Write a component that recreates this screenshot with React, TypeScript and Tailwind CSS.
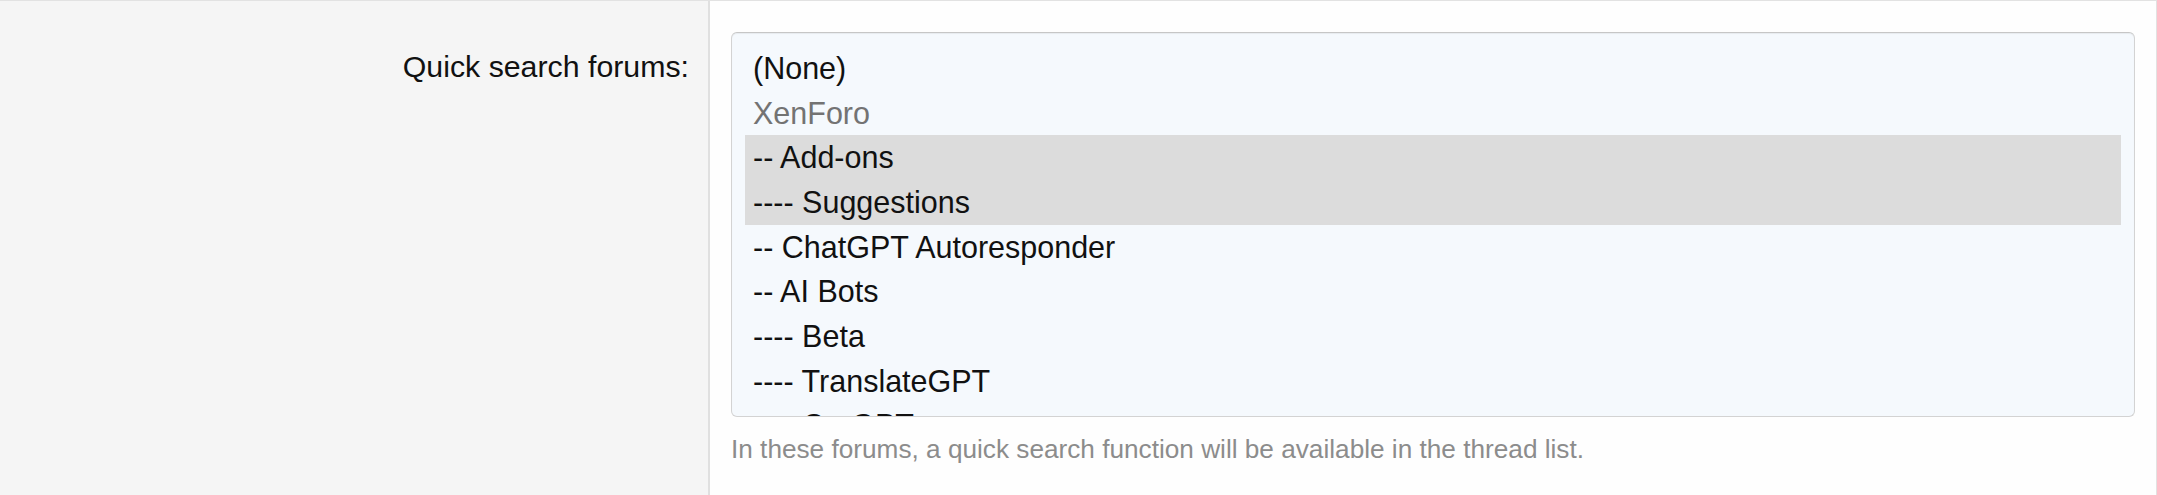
import React from "react";

type ForumOption = {
  label: string;
  group?: boolean;
  selected?: boolean;
};

const options: ForumOption[] = [
  { label: "(None)" },
  { label: "XenForo", group: true },
  { label: "-- Add-ons", selected: true },
  { label: "---- Suggestions", selected: true },
  { label: "-- ChatGPT Autoresponder" },
  { label: "-- AI Bots" },
  { label: "---- Beta" },
  { label: "---- TranslateGPT" },
  { label: "---- CarGPT" },
];

function ForumSelect() {
  return (
    <div className="h-[385px] overflow-hidden rounded-[6px] border border-[#d3d3d3] border-t-[#c6c6c6] bg-[#f5f9fd] px-[13px] pt-[13px] shadow-[inset_0_1px_1px_rgba(0,0,0,0.06)]">
      {options.map((opt) => (
        <div
          key={opt.label}
          className={`truncate px-[8px] text-[30.5px] leading-[44.67px] ${
            opt.selected ? "bg-[#dcdcdc]" : ""
          } ${opt.group ? "text-[#737373]" : "text-[#111111]"}`}
        >
          {opt.label}
        </div>
      ))}
    </div>
  );
}

export default function App() {
  return (
    <div className="min-h-[495px] bg-white font-['Liberation_Sans',Arial,sans-serif] text-[#111111]">
      <div className="flex min-h-[495px] border-t border-r border-[#e2e2e2]">
        <div className="w-[710px] shrink-0 border-r-2 border-[#e0e0e0] bg-[#f5f5f5] pr-[19px] pt-[43px] text-right">
          <label className="text-[30.3px] leading-[45px]">Quick search forums:</label>
        </div>
        <div className="flex-1 bg-[#fefefe] px-[21px] pt-[31px]">
          <ForumSelect />
          <p className="mt-[13px] text-[26.2px] leading-[39px] text-[#8c8c8c]">
            In these forums, a quick search function will be available in the thread list.
          </p>
        </div>
      </div>
    </div>
  );
}
